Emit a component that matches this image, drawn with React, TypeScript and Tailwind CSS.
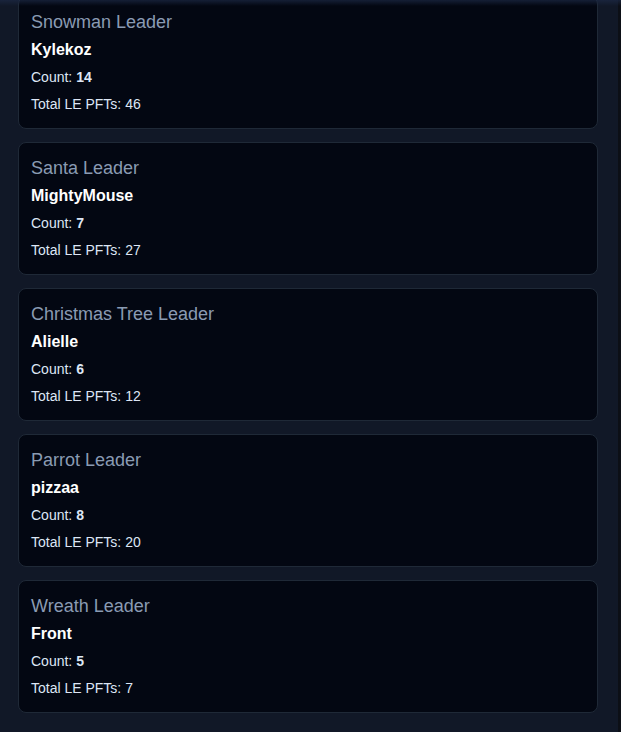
import React from "react";

const leaders = [
  { title: "Snowman Leader", name: "Kylekoz", count: 14, total: 46 },
  { title: "Santa Leader", name: "MightyMouse", count: 7, total: 27 },
  { title: "Christmas Tree Leader", name: "Alielle", count: 6, total: 12 },
  { title: "Parrot Leader", name: "pizzaa", count: 8, total: 20 },
  { title: "Wreath Leader", name: "Front", count: 5, total: 7 },
];

export default function App() {
  return (
    <div
      className="relative h-[732px] w-[621px] overflow-hidden bg-[#111827] flex"
      style={{ fontFamily: '"Liberation Sans", Arial, sans-serif' }}
    >
      <div className="flex-1 flex flex-col gap-[13px] pl-[18px] pr-[20px] -mt-[4px]">
        {leaders.map((l) => (
          <div
            key={l.title}
            className="h-[133px] shrink-0 rounded-lg border border-[#1f2937] bg-[#030712] px-3 pt-[11px]"
          >
            <h3 className="text-[18px] leading-[28px] text-[#8a9bb3]">{l.title}</h3>
            <p className="mt-[2px] text-base leading-6 font-bold text-white">{l.name}</p>
            <p className="mt-[5px] text-sm leading-5 text-[#dde6f5]">
              Count: <span className="font-bold">{l.count}</span>
            </p>
            <p className="mt-[7px] text-sm leading-5 text-[#dde6f5]">Total LE PFTs: {l.total}</p>
          </div>
        ))}
      </div>
      <div className="w-[3px] h-full bg-[#0c0f16]" />
      <div className="pointer-events-none absolute left-0 right-0 top-0 h-[6px] bg-gradient-to-b from-[#1c2945]/70 to-transparent" />
    </div>
  );
}
